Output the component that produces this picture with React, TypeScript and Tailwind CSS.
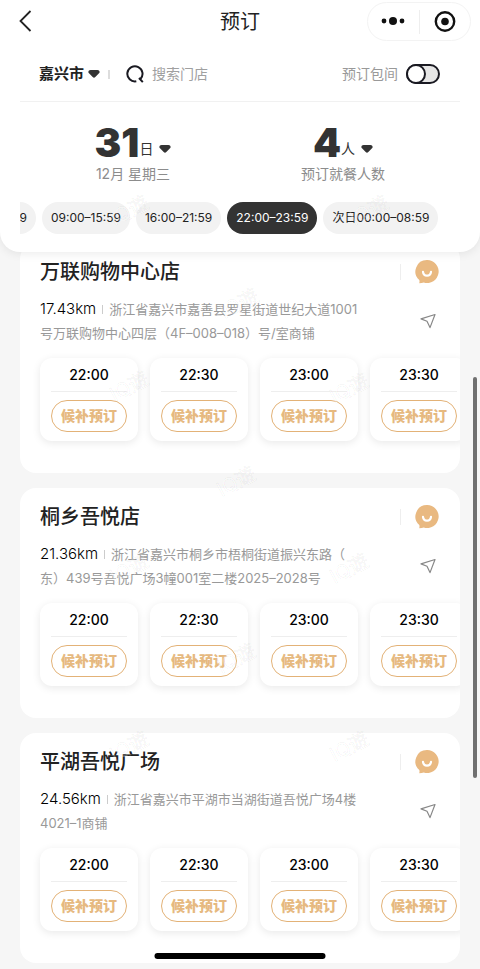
import React from 'react'

const stores = [
  {
    name: '万联购物中心店',
    distance: '17.43km',
    address: ['浙江省嘉兴市嘉善县罗星街道世纪大道1001', '号万联购物中心四层（4F–008–018）号/室商铺'],
  },
  {
    name: '桐乡吾悦店',
    distance: '21.36km',
    address: ['浙江省嘉兴市桐乡市梧桐街道振兴东路（', '东）439号吾悦广场3幢001室二楼2025–2028号'],
  },
  {
    name: '平湖吾悦广场',
    distance: '24.56km',
    address: ['浙江省嘉兴市平湖市当湖街道吾悦广场4楼', '4021–1商铺'],
  },
]

const slots = ['22:00', '22:30', '23:00', '23:30']

const periods = ['09:00–15:59', '16:00–21:59', '22:00–23:59', '次日00:00–08:59']

const watermarks = [
  [130, 212],
  [370, 212],
  [240, 305],
  [130, 388],
  [350, 390],
  [237, 483],
  [130, 570],
  [350, 570],
  [237, 660],
  [130, 748],
  [350, 748],
]

function Caret() {
  return (
    <svg className="h-2 w-3 shrink-0" viewBox="0 0 12 8" fill="#333" aria-hidden="true">
      <path d="M2.6 0h6.8C11.300 0 12.400 1.900 11 3.300L7.300 7.100Q6 8.400 4.700 7.100L1 3.300C-.4 1.900 .7 0 2.600 0Z" />
    </svg>
  )
}

function TitleBar() {
  return (
    <div className="grid grid-cols-3 items-center px-[9px] pt-[2px]">
      <button aria-label="返回" className="ml-2 flex w-6 justify-start">
        <svg width="18" height="24" viewBox="0 0 18 24" fill="none" stroke="#222" strokeWidth="1.8" aria-hidden="true">
          <path d="M13.500 1L3.500 11L13.500 21" />
        </svg>
      </button>
      <h1 className="text-center text-xl text-[#222]">预订</h1>
      <div className="flex h-[39px] w-[104px] items-center justify-self-end rounded-full border border-[#f3f3f3]">
        <button aria-label="更多" className="flex flex-1 justify-center">
          <svg width="24" height="10" viewBox="0 0 24 10" fill="#111" aria-hidden="true">
            <circle cx="3" cy="4" r="2.400" />
            <circle cx="12" cy="4" r="4" />
            <circle cx="21" cy="4" r="2.400" />
          </svg>
        </button>
        <span className="h-6 w-px bg-[#eeeeee]" />
        <button aria-label="关闭" className="flex flex-1 justify-center">
          <svg width="22" height="22" viewBox="0 0 22 22" aria-hidden="true">
            <circle cx="11" cy="10.500" r="9.200" fill="none" stroke="#111" strokeWidth="2.400" />
            <circle cx="11" cy="10.500" r="3.800" fill="#111" />
          </svg>
        </button>
      </div>
    </div>
  )
}

function SearchRow() {
  return (
    <div className="mx-5 flex h-[61px] items-center border-b border-[#f1f1f1] pt-[6px] pr-5 pl-[19px]">
      <button className="flex items-center gap-1 text-[15px] font-bold text-[#222]">
        嘉兴市
        <Caret />
      </button>
      <span className="mr-4 ml-2 h-[9px] w-[2px] bg-[#dddddd]" />
      <svg className="shrink-0" width="18" height="18" viewBox="0 0 18 18" fill="none" stroke="#1a1a22" strokeWidth="2" aria-hidden="true">
        <path d="M10.300 16.300A7.600 7.600 0 1 1 14.300 14.200M13 13L16.800 17.200" />
      </svg>
      <input
        type="search"
        aria-label="搜索门店"
        placeholder="搜索门店"
        className="ml-2 w-20 min-w-0 flex-1 bg-transparent text-sm outline-none placeholder:text-[#a0a0a0]"
      />
      <label className="flex items-center gap-2 text-sm text-[#999999]">
        预订包间
        <input
          type="checkbox"
          className="relative h-5 w-[34px] appearance-none rounded-full border-2 border-[#1a1a22] bg-[#e6e6e6] before:absolute before:-top-[2px] before:-left-[2px] before:size-5 before:rounded-full before:border-2 before:border-[#1a1a22] before:bg-white"
        />
      </label>
    </div>
  )
}

function Picker({ value, unit, caption }: { value: string; unit: string; caption: string }) {
  return (
    <button className="flex flex-col items-center">
      <span className="flex items-end text-[#333]">
        <span className="text-[40px] leading-[42px] font-black">{value}</span>
        <span className="flex items-center gap-[6px] pb-[5px] text-sm leading-5">
          {unit}
          <Caret />
        </span>
      </span>
      <span className="text-sm leading-5 text-[#8c8c8c]">{caption}</span>
    </button>
  )
}

function Period({ label, active }: { label: string; active?: boolean }) {
  return (
    <button
      aria-pressed={!!active}
      className={`h-8 shrink-0 rounded-full px-[9px] text-xs whitespace-nowrap ${active ? 'bg-[#333] text-white' : 'bg-[#f2f2f2] text-[#222]'}`}
    >
      {label}
    </button>
  )
}

function StoreCard({ store }: { store: (typeof stores)[number] }) {
  return (
    <section className="overflow-hidden rounded-2xl bg-white pt-[15px]">
      <div className="flex h-7 items-center pr-[21px] pl-5">
        <h2 className="flex-1 text-xl leading-7 font-medium text-[#222]">{store.name}</h2>
        <span className="mr-[14px] h-4 w-px bg-[#eeeeee]" />
        <button aria-label="联系门店">
          <svg width="24" height="24" viewBox="0 0 24 24" aria-hidden="true">
            <path d="M12 0A11.500 11.500 0 1 1 8.800 22.500Q7 23.100 4.200 23.300Q4.800 21.800 4.300 20.100A11.500 11.500 0 0 1 12 0Z" fill="#e9b981" />
            <path d="M8 11.800Q8.400 15.600 12 15.600T16 11.800" fill="none" stroke="#fff" strokeWidth="2.200" strokeLinecap="round" />
          </svg>
        </button>
      </div>

      <div className="mt-[11px] flex items-center pr-6 pl-5">
        <p className="flex-1 text-[13px] leading-6 whitespace-nowrap text-[#999999]">
          <span className="text-[15px] leading-6 font-light text-black">{store.distance}</span>
          <span className="mx-[6px] inline-block h-[9px] w-px bg-[#cccccc]" />
          {store.address[0]}
          <br />
          {store.address[1]}
        </p>
        <button aria-label="导航">
          <svg width="16" height="16" viewBox="0 0 16 16" fill="none" stroke="#888" strokeWidth="1.200" strokeLinejoin="round" aria-hidden="true">
            <path d="M15 1.500L1 5.900L7 8.300L10 14.600Z" />
          </svg>
        </button>
      </div>

      <div className="flex gap-3 overflow-hidden px-5 pt-[13px] pb-8">
        {slots.map((time) => (
          <div key={time} className="flex w-[98px] shrink-0 flex-col items-center rounded-xl bg-white px-[11px] pb-[9px] shadow-[0_2px_8px_rgba(0,0,0,0.09)]">
            <span className="h-[33px] text-sm leading-[34px] font-medium text-black">{time}</span>
            <span className="h-px w-full bg-[#eeeeee]" />
            <button className="mt-2 h-8 w-full rounded-full border border-[#e3b277] text-sm font-black text-[#e6b980]">
              候补预订
            </button>
          </div>
        ))}
      </div>
    </section>
  )
}

export default function App() {
  return (
    <div className="relative min-h-screen overflow-hidden bg-[#f6f6f6] font-['Inter','Noto_Sans_CJK_SC',sans-serif]">
      <header className="relative z-10 rounded-b-[20px] bg-white pb-[18px] shadow-[0_2px_10px_rgba(0,0,0,0.08)]">
        <TitleBar />
        <SearchRow />
        <div className="grid grid-cols-2 pt-[20px] pr-8 pl-7">
          <Picker value="31" unit="日" caption="12月 星期三" />
          <Picker value="4" unit="人" caption="预订就餐人数" />
        </div>
        <div className="mx-5 mt-[18px] flex gap-[6px] overflow-hidden">
          <div className="flex w-4 shrink-0 justify-end overflow-hidden">
            <Period label="06:00–08:59" />
          </div>
          {periods.map((label) => (
            <Period key={label} label={label} active={label === '22:00–23:59'} />
          ))}
        </div>
      </header>

      <main className="-mt-[9px] flex flex-col gap-[15px] px-5 pb-[6px]">
        {stores.map((store) => (
          <StoreCard key={store.name} store={store} />
        ))}
      </main>

      {/* Watermark */}
      <svg className="pointer-events-none absolute inset-0 z-20 size-full" aria-hidden="true">
        {watermarks.map(([x, y]) => (
          <text
            key={`${x}-${y}`}
            x={x}
            y={y}
            transform={`rotate(-28 ${x} ${y})`}
            textAnchor="middle"
            dominantBaseline="middle"
            fontSize="20"
            fill="#fff"
            fillOpacity="0.3"
            stroke="#000"
            strokeOpacity="0.04"
          >
            IQ遊
          </text>
        ))}
      </svg>

      {/* Scrollbar and home indicator */}
      <div className="fixed top-[377px] right-[3px] z-20 h-[401px] w-1 rounded-full bg-[#707070]" />
      <div className="fixed bottom-[10px] left-1/2 z-20 h-[6px] w-[171px] -translate-x-1/2 rounded-full bg-black" />
    </div>
  )
}
